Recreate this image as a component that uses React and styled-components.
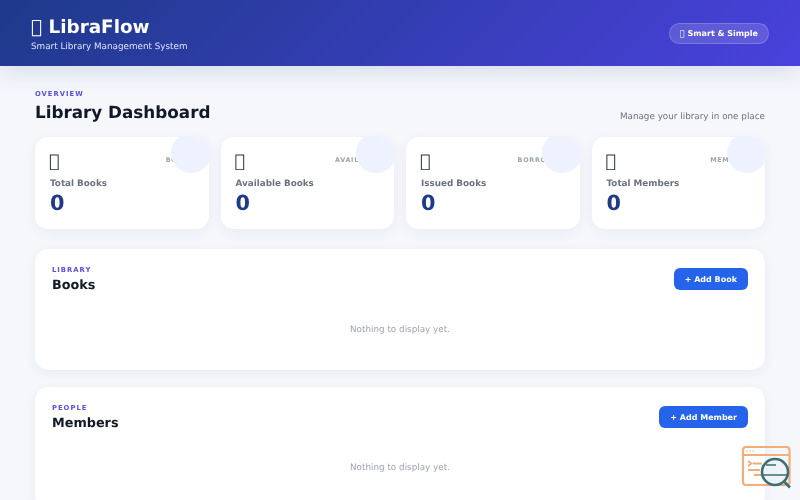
import React from 'react';
import styled, { createGlobalStyle } from 'styled-components';

// the reference shows its emoji as empty "missing glyph" boxes, so this is a codepoint no font has
const MISSING = '\u{F0000}';

const GlobalStyle = createGlobalStyle`
  html, body {
    margin: 0;
    padding: 0;
    height: 500px;
    overflow: hidden;
    background: #f5f7fb;
    font-family: "DejaVu Sans", sans-serif;
    text-rendering: geometricPrecision;
  }
  #root {
    position: relative;
    height: 500px;
    overflow: hidden;
    will-change: transform;
  }
  * { box-sizing: border-box; }
`;

const Header = styled.header`
  position: relative;
  height: 66px;
  padding: 0 31px;
  display: flex;
  align-items: center;
  justify-content: space-between;
  background: linear-gradient(135deg, #1e3a8a, #4a41dd);
  box-shadow: 0 6px 24px rgba(30, 58, 138, 0.14);
  color: #fff;
`;

const Logo = styled.h1`
  margin: 2px 0 0;
  font-size: 18.4px;
  line-height: 24px;
  font-weight: 700;
`;

const Tagline = styled.p`
  margin: 1px 0 0;
  font-size: 8.8px;
  line-height: 12px;
  color: #dbe2ff;
`;

const Pill = styled.div`
  height: 21px;
  padding: 0 10px;
  display: flex;
  align-items: center;
  border-radius: 999px;
  border: 1px solid rgba(255, 255, 255, 0.18);
  background: rgba(255, 255, 255, 0.14);
  font-size: 8px;
  font-weight: 700;
`;

const Main = styled.main`
  padding: 24px 35px 0;
`;

const PageHead = styled.div`
  display: flex;
  align-items: flex-end;
  justify-content: space-between;
  margin-bottom: 14px;
`;

const Eyebrow = styled.div`
  font-size: 6.8px;
  line-height: 9px;
  font-weight: 700;
  letter-spacing: 1px;
  color: #5a50e0;
`;

const PageTitle = styled.h2`
  margin: 2px 0 0;
  font-size: 16.8px;
  line-height: 22px;
  font-weight: 700;
  color: #111827;
`;

const PageNote = styled.p`
  margin: 0;
  font-size: 8.8px;
  line-height: 12px;
  color: #6b7280;
`;

const StatGrid = styled.div`
  display: grid;
  grid-template-columns: repeat(4, 1fr);
  gap: 12px;
  margin-bottom: 20px;
`;

const StatCard = styled.div`
  position: relative;
  height: 92px;
  padding: 14px 14px 14px 15px;
  overflow: hidden;
  border-radius: 13px;
  background: #fff;
  box-shadow: 0 3px 14px rgba(30, 58, 138, 0.06);
`;

const Blob = styled.div`
  position: absolute;
  top: -4px;
  right: -2px;
  width: 40px;
  height: 40px;
  border-radius: 50%;
  background: #eef2ff;
`;

const StatTop = styled.div`
  display: flex;
  align-items: flex-start;
  justify-content: space-between;
  height: 24px;
`;

const StatIcon = styled.span`
  margin-left: -1px;
  font-size: 17.6px;
  line-height: 22px;
  color: #1f2937;
`;

const StatTag = styled.span`
  font-size: 6.4px;
  line-height: 10px;
  margin-top: 4px;
  font-weight: 700;
  letter-spacing: 0.7px;
  color: #9ca3af;
`;

const StatLabel = styled.div`
  margin-top: 4px;
  font-size: 8.8px;
  line-height: 11px;
  font-weight: 700;
  color: #6b7280;
`;

const StatValue = styled.div`
  margin-top: 1px;
  font-size: 20.8px;
  line-height: 25px;
  font-weight: 700;
  color: #1e3a8a;
`;

const Panel = styled.section`
  height: ${(p) => p.$height}px;
  padding: 16px 17px;
  margin-bottom: 17px;
  border-radius: 14px;
  background: #fff;
  box-shadow: 0 3px 14px rgba(30, 58, 138, 0.06);
`;

const PanelHead = styled.div`
  display: flex;
  align-items: flex-start;
  justify-content: space-between;
`;

const PanelTitle = styled.h3`
  margin: 2px 0 0;
  font-size: 12.8px;
  line-height: 18px;
  font-weight: 700;
  color: #111827;
`;

const PanelCaption = styled.div`
  padding-top: 1px;
`;

const AddButton = styled.button`
  height: 22px;
  margin-top: 3px;
  padding: 0 11px;
  border: 0;
  border-radius: 6px;
  background: #2563eb;
  color: #fff;
  font-family: inherit;
  font-size: 8px;
  font-weight: 700;
  text-rendering: inherit;
`;

const Empty = styled.p`
  margin: 28.5px 0 0;
  text-align: center;
  font-size: 8.8px;
  line-height: 12px;
  color: #9ca3af;
`;

const Badge = styled.svg`
  position: absolute;
  right: 8px;
  bottom: 10px;
`;

const stats = [
  { tag: 'BOOKS', label: 'Total Books' },
  { tag: 'AVAILABLE', label: 'Available Books' },
  { tag: 'BORROWED', label: 'Issued Books' },
  { tag: 'MEMBERS', label: 'Total Members' },
];

const panels = [
  { eyebrow: 'LIBRARY', title: 'Books', action: '+ Add Book', height: 121 },
  { eyebrow: 'PEOPLE', title: 'Members', action: '+ Add Member', height: 121 },
];

export default function App() {
  return (
    <>
      <GlobalStyle />
      <Header>
        <div>
          <Logo>{MISSING} LibraFlow</Logo>
          <Tagline>Smart Library Management System</Tagline>
        </div>
        <Pill>{MISSING} Smart &amp; Simple</Pill>
      </Header>
      <Main>
        <PageHead>
          <div>
            <Eyebrow>OVERVIEW</Eyebrow>
            <PageTitle>Library Dashboard</PageTitle>
          </div>
          <PageNote>Manage your library in one place</PageNote>
        </PageHead>
        <StatGrid>
          {stats.map((s) => (
            <StatCard key={s.tag}>
              <StatTop>
                <StatIcon>{MISSING}</StatIcon>
                <StatTag>{s.tag}</StatTag>
              </StatTop>
              <StatLabel>{s.label}</StatLabel>
              <StatValue>0</StatValue>
              <Blob />
            </StatCard>
          ))}
        </StatGrid>
        {panels.map((p) => (
          <Panel key={p.title} $height={p.height}>
            <PanelHead>
              <PanelCaption>
                <Eyebrow>{p.eyebrow}</Eyebrow>
                <PanelTitle>{p.title}</PanelTitle>
              </PanelCaption>
              <AddButton>{p.action}</AddButton>
            </PanelHead>
            <Empty>Nothing to display yet.</Empty>
          </Panel>
        ))}
      </Main>
      <Badge width="52" height="46" viewBox="0 0 52 46" fill="none">
        <rect x="3" y="3" width="46.500" height="38" rx="3" stroke="#f2ad78" strokeWidth="2.200" />
        <path d="M3 11H49.500" stroke="#f2ad78" strokeWidth="2" />
        <path d="M6.500 7H8M9.500 7H11M12.500 7H14" stroke="#f2ad78" strokeWidth="1.200" />
        <path d="M8 17L11.500 19.500L8 22" stroke="#f2ad78" strokeWidth="1.800" />
        <path d="M13 19.500H22M8 26H20M14 31H25" stroke="#f2ad78" strokeWidth="1.800" />
        <circle cx="35" cy="28" r="13" fill="#eef3f7" stroke="#3a6f73" strokeWidth="2.600" />
        <path d="M26 21H36M22 31H48" stroke="#3a6f73" strokeWidth="1.600" />
        <path d="M44.500 38L50 43.500" stroke="#3a6f73" strokeWidth="2.600" />
      </Badge>
    </>
  );
}
